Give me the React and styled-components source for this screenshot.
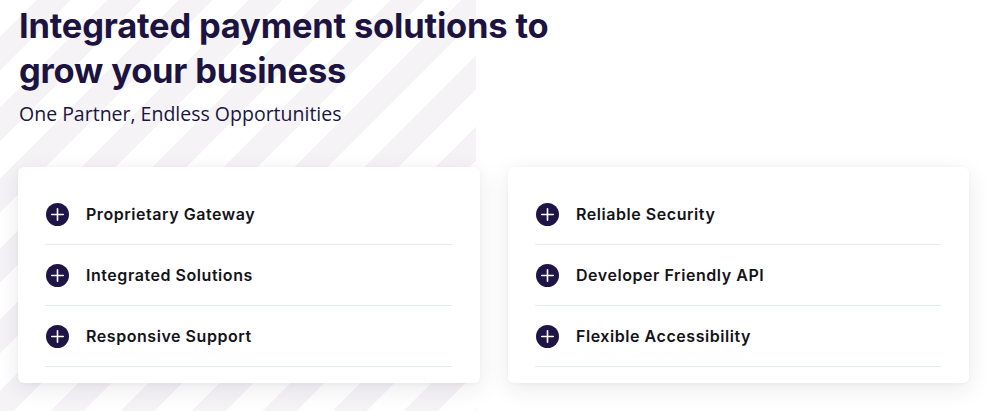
import React from "react";
import styled, { createGlobalStyle } from "styled-components";

const GlobalStyle = createGlobalStyle`
  html, body {
    margin: 0;
    padding: 0;
    background: #ffffff;
  }
  * {
    box-sizing: border-box;
  }
`;

const Page = styled.div`
  width: 1000px;
  height: 411px;
  overflow: hidden;
  padding: 3px 31px 0 18px;
  background-color: #ffffff;
  background-image: repeating-linear-gradient(
    135deg,
    #ffffff 0px,
    #ffffff 26px,
    #f5f3f6 26px,
    #f5f3f6 50px
  );
  background-size: 476px 100%;
  background-repeat: no-repeat;
  font-family: Inter, "Noto Sans", sans-serif;
`;

const Header = styled.div`
  padding-left: 1px;
`;

const Title = styled.h1`
  margin: 0;
  font-family: Inter, "Noto Sans", sans-serif;
  font-size: 34.5px;
  font-weight: 700;
  line-height: 45px;
  letter-spacing: -0.2px;
  color: #1c1340;
`;

const Subtitle = styled.p`
  margin: 7px 0 0;
  font-family: "Open Sans", "Noto Sans", sans-serif;
  font-size: 19.5px;
  font-weight: 400;
  line-height: 28px;
  color: #1c1340;
`;

const Cards = styled.div`
  display: grid;
  grid-template-columns: 462px 461px;
  gap: 28px;
  margin-top: 39px;
`;

const Card = styled.div`
  background: #ffffff;
  border-radius: 6px;
  padding: 17px 28px 16px 27px;
  box-shadow: 0 6px 24px rgba(30, 30, 50, 0.09), 0 1px 4px rgba(30, 30, 50, 0.04);
`;

const Item = styled.div`
  display: flex;
  align-items: center;
  gap: 17px;
  height: 61px;
  padding-left: 1px;
  border-bottom: 1px solid #e4ebed;
`;

const Label = styled.span`
  font-family: Inter, "Noto Sans", sans-serif;
  font-size: 16px;
  font-weight: 600;
  color: #141318;
  letter-spacing: 0.55px;
`;

const PlusIcon = () => (
  <svg width="23" height="23" viewBox="0 0 24 24" aria-hidden="true">
    <circle cx="12" cy="12" r="12" fill="#1e1446" />
    <path d="M12 6v12M6 12h12" stroke="#ffffff" strokeWidth="1.7" strokeLinecap="round" />
  </svg>
);

const left = ["Proprietary Gateway", "Integrated Solutions", "Responsive Support"];
const right = ["Reliable Security", "Developer Friendly API", "Flexible Accessibility"];

const App = () => {
  return (
    <Page>
      <GlobalStyle />
      <Header>
        <Title>
          Integrated payment solutions to
          <br />
          grow your business
        </Title>
        <Subtitle>One Partner, Endless Opportunities</Subtitle>
      </Header>
      <Cards>
        {[left, right].map((list, i) => (
          <Card key={i}>
            {list.map((label) => (
              <Item key={label}>
                <PlusIcon />
                <Label>{label}</Label>
              </Item>
            ))}
          </Card>
        ))}
      </Cards>
    </Page>
  );
};

export default App;
